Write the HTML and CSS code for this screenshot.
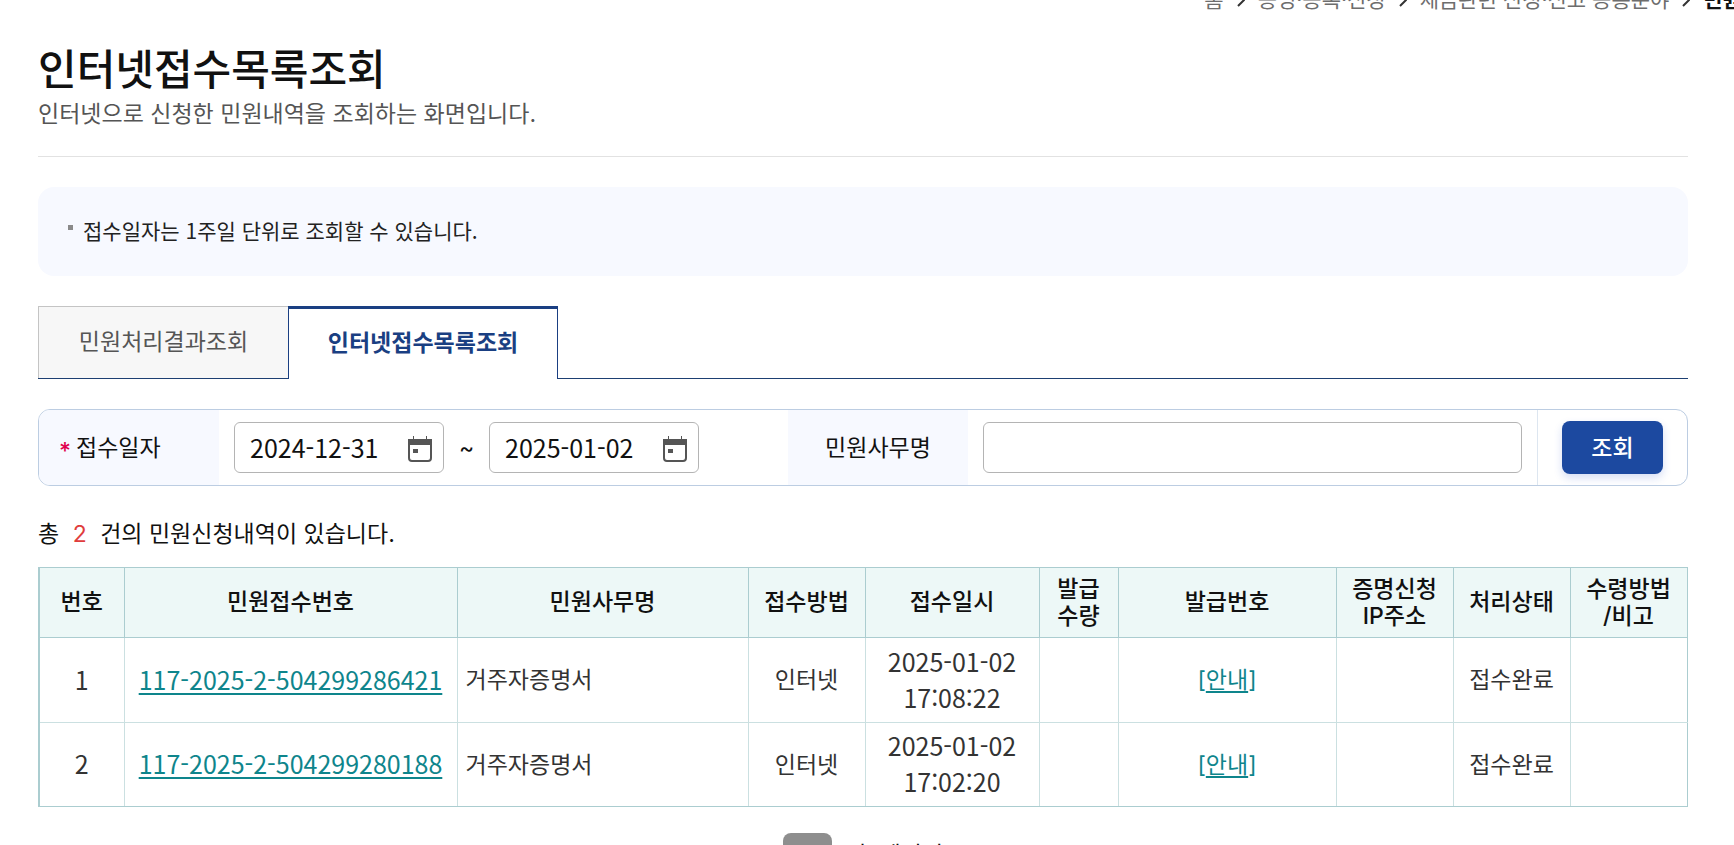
FILE: index.html
```html
<!DOCTYPE html>
<html lang="ko">

<head>
    <meta charset="UTF-8">
    <meta name="viewport" content="width=device-width, initial-scale=1.0">
    <title>인터넷접수목록조회</title>

    <link rel="stylesheet" href="styles.css">
</head>

<body>
    <div class="container">
        <nav class="breadcrumb">
            <a href="#">홈</a>
            <svg class="arrow" viewBox="0 0 8 14"><path d="M1 1l6 6-6 6" /></svg>
            <a href="#">증명·등록·신청</a>
            <svg class="arrow" viewBox="0 0 8 14"><path d="M1 1l6 6-6 6" /></svg>
            <a href="#">세금관련 신청·신고 공통분야</a>
            <svg class="arrow" viewBox="0 0 8 14"><path d="M1 1l6 6-6 6" /></svg>
            <strong>민원</strong>
        </nav>

        <header class="page-header">
            <h1>인터넷접수목록조회</h1>
            <p>인터넷으로 신청한 민원내역을 조회하는 화면입니다.</p>
        </header>

        <ul class="notice">
            <li>접수일자는 1주일 단위로 조회할 수 있습니다.</li>
        </ul>

        <div class="tabs">
            <a href="#" class="tab">민원처리결과조회</a>
            <a href="#" class="tab active">인터넷접수목록조회</a>
        </div>

        <form class="search" id="searchForm">
            <label class="search-label required" for="startDate">접수일자</label>
            <div class="search-field">
                <div class="date-box">
                    <input type="text" id="startDate" name="startDate" value="2024-12-31">
                    <button type="button" class="calendar" aria-label="시작일 선택">
                        <svg viewBox="0 0 24 26"><path class="fill" d="M0 3h24v6H0zM5 0h1v4H5zM18 0h1v4h-1zM5 13h5v4H5z" /><path class="line" d="M1 8v14a3 3 0 0 0 3 3h16a3 3 0 0 0 3-3V8" /></svg>
                    </button>
                </div>
                <span class="tilde">~</span>
                <div class="date-box">
                    <input type="text" id="endDate" name="endDate" value="2025-01-02" aria-label="종료일">
                    <button type="button" class="calendar" aria-label="종료일 선택">
                        <svg viewBox="0 0 24 26"><path class="fill" d="M0 3h24v6H0zM5 0h1v4H5zM18 0h1v4h-1zM5 13h5v4H5z" /><path class="line" d="M1 8v14a3 3 0 0 0 3 3h16a3 3 0 0 0 3-3V8" /></svg>
                    </button>
                </div>
            </div>
            <label class="search-label center" for="taskName">민원사무명</label>
            <div class="search-field">
                <input type="text" id="taskName" name="taskName">
            </div>
            <div class="search-action">
                <button type="submit" class="btn-search">조회</button>
            </div>
        </form>

        <p class="total">총 <span class="count">2</span> 건의 민원신청내역이 있습니다.</p>

        <table class="list">
            <colgroup>
                <col class="col-no">
                <col class="col-receipt">
                <col class="col-task">
                <col class="col-small">
                <col class="col-date">
                <col class="col-qty">
                <col class="col-issue">
                <col class="col-small">
                <col class="col-small">
                <col class="col-small">
            </colgroup>
            <thead>
                <tr>
                    <th>번호</th>
                    <th>민원접수번호</th>
                    <th>민원사무명</th>
                    <th>접수방법</th>
                    <th>접수일시</th>
                    <th>발급<br>수량</th>
                    <th>발급번호</th>
                    <th>증명신청<br>IP주소</th>
                    <th>처리상태</th>
                    <th>수령방법<br>/비고</th>
                </tr>
            </thead>
            <tbody>
                <tr>
                    <td class="num">1</td>
                    <td class="num"><a href="#">117-2025-2-504299286421</a></td>
                    <td class="left">거주자증명서</td>
                    <td>인터넷</td>
                    <td class="num">2025-01-02<br>17:08:22</td>
                    <td></td>
                    <td><span class="guide">[<a href="#">안내</a>]</span></td>
                    <td></td>
                    <td>접수완료</td>
                    <td></td>
                </tr>
                <tr>
                    <td class="num">2</td>
                    <td class="num"><a href="#">117-2025-2-504299280188</a></td>
                    <td class="left">거주자증명서</td>
                    <td>인터넷</td>
                    <td class="num">2025-01-02<br>17:02:20</td>
                    <td></td>
                    <td><span class="guide">[<a href="#">안내</a>]</span></td>
                    <td></td>
                    <td>접수완료</td>
                    <td></td>
                </tr>
            </tbody>
        </table>

        <div class="paging">
            <button type="button" class="page-current">1</button>
            <span>총 페이지</span>
        </div>
    </div>
</body>

</html>
```
FILE: styles.css
```css
/* Global reset */

* {
    margin: 0;
    padding: 0;
    box-sizing: border-box;
}

html {
    scrollbar-width: none;
}

body {
    font-family: Inter, 'Noto Sans CJK KR', sans-serif;
    font-size: 23px;
    line-height: 36px;
    color: #111;
    background-color: #fff;
    overflow-x: hidden;
}

input,
button {
    font: inherit;
    color: inherit;
}

.container {
    padding: 0 46px 0 38px;
}

/* Breadcrumb */

.breadcrumb {
    display: flex;
    justify-content: flex-end;
    align-items: center;
    gap: 13px;
    margin-top: -15px;
    margin-right: -54px;
    font-size: 21px;
    line-height: 30px;
    white-space: nowrap;
}

.breadcrumb a {
    color: #6d6d6d;
    text-decoration: none;
}

.arrow {
    width: 8px;
    height: 14px;
    fill: none;
    stroke: #333;
    stroke-width: 2;
}

/* Title */

.page-header {
    margin-top: 30px;
    padding-bottom: 25px;
    border-bottom: 1px solid #e2e2e2;
}

.page-header h1 {
    font-size: 42px;
    font-weight: 500;
    line-height: 50px;
}

.page-header p {
    margin-top: 2px;
    line-height: 34px;
    color: #555;
}

.notice {
    margin-top: 30px;
    padding: 26px 30px 28px;
    border-radius: 16px;
    background-color: #f7f9ff;
    list-style: none;
}

.notice li {
    display: flex;
    align-items: center;
    gap: 10px;
    font-family: 'Noto Sans CJK KR', sans-serif;
    font-size: 21px;
    line-height: 35px;
    color: #222;
}

.notice li::before {
    content: "";
    width: 5px;
    height: 5px;
    margin-bottom: 6px;
    background-color: #8a8a8a;
}

/* Tabs */

.tabs {
    display: flex;
    height: 73px;
    margin-top: 30px;
    border-bottom: 1px solid #1d3f72;
}

.tab {
    display: flex;
    align-items: center;
    justify-content: center;
    width: 250px;
    padding-bottom: 2px;
    border: 1px solid #c4c4c4;
    border-width: 1px 0 0 1px;
    background-color: #f7f7f7;
    color: #555;
    text-decoration: none;
}

.tab.active {
    width: 270px;
    margin-bottom: -1px;
    border: 1px solid #1a3f82;
    border-width: 3px 1px 0;
    background-color: #fff;
    color: #1a3f82;
    font-weight: bold;
}

/* Search box */

.search {
    display: flex;
    height: 77px;
    margin-top: 30px;
    border: 1px solid #bccde2;
    border-radius: 12px;
    overflow: hidden;
}

.search-label {
    display: flex;
    align-items: center;
    width: 180px;
    padding-left: 20px;
    background-color: #f7f9ff;
}

.search-label.center {
    justify-content: center;
    padding-left: 0;
}

.search-label.required::before {
    content: "*";
    width: 17px;
    padding-top: 6px;
    color: #e0004d;
    font-weight: 500;
}

.search-field {
    flex: 1;
    display: flex;
    align-items: center;
    padding: 0 15px;
}

.search-field input {
    width: 100%;
    height: 51px;
    padding: 0 15px 2px;
    border: 1px solid #b4b4b4;
    border-radius: 6px;
    background-color: #fff;
}

.date-box {
    position: relative;
    width: 210px;
}

.date-box input {
    display: block;
    font-family: 'Noto Sans CJK KR', sans-serif;
    font-size: 25px;
}

.calendar {
    position: absolute;
    top: 14px;
    right: 12px;
    width: 24px;
    height: 26px;
    border: none;
    background: none;
    cursor: pointer;
}

.calendar svg {
    display: block;
}

.calendar .fill {
    fill: #555;
}

.calendar .line {
    fill: none;
    stroke: #555;
    stroke-width: 2;
}

.tilde {
    width: 45px;
    text-align: center;
}

.search-action {
    display: flex;
    align-items: center;
    width: 150px;
    padding: 0 24px;
    border-left: 1px solid #dde6f0;
}

.btn-search {
    width: 101px;
    height: 53px;
    border: none;
    border-radius: 8px;
    background-color: #1c49a0;
    box-shadow: 0 4px 8px rgba(28, 73, 200, 0.18);
    color: #fff;
    font-weight: 500;
    cursor: pointer;
}

/* Result list */

.total {
    margin-top: 30px;
}

.total .count {
    margin: 0 7px;
    color: #e03c3c;
}

.list {
    width: calc(100% - 1px);
    margin-top: 15px;
    table-layout: fixed;
    border-collapse: collapse;
    border: 1px solid #abcdd0;
    border-left-width: 2px;
}

.col-no { width: 85px; }
.col-receipt { width: 333px; }
.col-task { width: 291px; }
.col-small { width: 117px; }
.col-date { width: 174px; }
.col-qty { width: 79px; }
.col-issue { width: 218px; }

.list th {
    height: 70px;
    border: 1px solid #abcdd0;
    background-color: #edf8f7;
    font-weight: 500;
    line-height: 27px;
    white-space: nowrap;
}

.list td {
    height: 85px;
    border: 1px solid #cbe0e1;
    color: #333;
    text-align: center;
}

.list td:first-child {
    border-left: 2px solid #abcdd0;
}

.list tr:last-child td {
    height: 84px;
    border-bottom-color: #abcdd0;
}

.list td:last-child {
    border-right-color: #abcdd0;
}

.list td.left {
    padding-left: 8px;
    text-align: left;
}

.list td.num {
    padding-bottom: 3px;
    font-family: 'Noto Sans CJK KR', sans-serif;
    font-size: 25px;
}

.list a {
    color: #0e858c;
    text-underline-offset: 3px;
    text-decoration-thickness: 2px;
}

.guide {
    color: #0e858c;
}

/* Paging */

.paging {
    display: flex;
    gap: 20px;
    justify-content: center;
    margin-top: 26px;
}

.page-current {
    width: 49px;
    height: 49px;
    border: none;
    border-radius: 8px;
    background-color: #8e8e8e;
    color: #fff;
}

.paging span {
    padding-top: 4px;
}
```
